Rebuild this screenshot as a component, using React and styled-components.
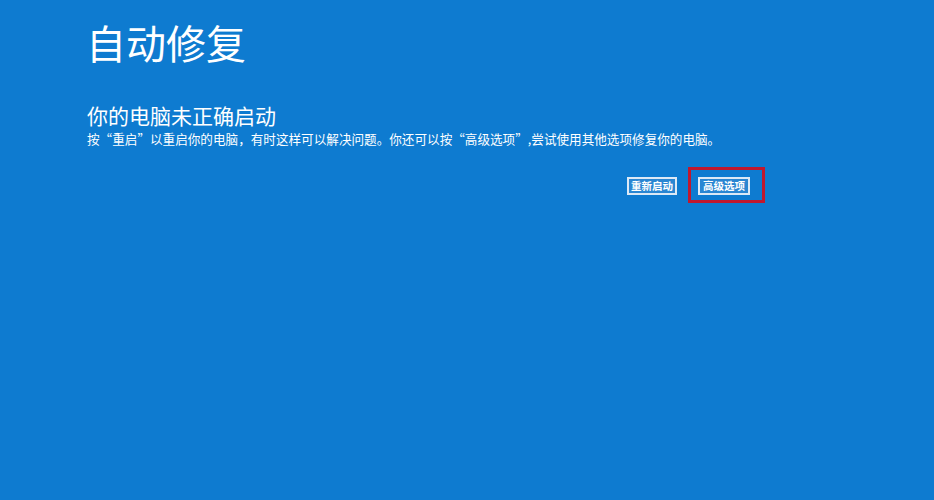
import React from "react";
import styled, { createGlobalStyle } from "styled-components";

const Global = createGlobalStyle`
  html, body { margin: 0; padding: 0; background: #0e7bd0; }
  body { width: 934px; height: 500px; overflow: hidden; }
  #root { width: 934px; height: 500px; }
`;

const Screen = styled.div`
  width: 934px;
  height: 500px;
  box-sizing: border-box;
  background: #0e7bd0;
  padding: 17px 0 0 86px;
  color: #ffffff;
  font-family: "Noto Sans CJK SC", "Noto Sans", sans-serif;
`;

const Column = styled.div`
  width: 679px;
  display: flex;
  flex-direction: column;
`;

const Title = styled.h1`
  margin: 0;
  font-size: 40px;
  line-height: 50px;
  font-weight: 400;
`;

const Subtitle = styled.h2`
  margin: 35px 0 0 1px;
  font-size: 21px;
  line-height: 26px;
  font-weight: 400;
`;

const Body = styled.p`
  margin: 2px 0 0 1px;
  font-size: 12.6px;
  line-height: 18px;
  font-weight: 400;
  white-space: nowrap;
`;

const ButtonRow = styled.div`
  margin-top: 19px;
  display: flex;
  justify-content: flex-end;
  align-items: flex-start;
  gap: 11px;
`;

const Button = styled.button`
  margin-top: ${(p) => p.$offset || 0}px;
  height: 18px;
  width: ${(p) => p.$w}px;
  box-sizing: border-box;
  padding: 0;
  border: 2px solid #dce9f6;
  background: #2a86d2;
  color: #ffffff;
  font-family: "Noto Sans CJK SC", sans-serif;
  font-size: 10.5px;
  font-weight: 700;
  line-height: 14px;
  cursor: pointer;
`;

const Highlight = styled.div`
  border: 3px solid #c0172e;
  padding: 7px 12px 5px 7px;
  display: flex;
`;

export default function App() {
  return (
    <>
      <Global />
      <Screen>
        <Column>
          <Title>自动修复</Title>
          <Subtitle>你的电脑未正确启动</Subtitle>
          <Body>
            按“重启”以重启你的电脑，有时这样可以解决问题。你还可以按“高级选项”,尝试使用其他选项修复你的电脑。
          </Body>
          <ButtonRow>
            <Button $w={50} $offset={10}>重新启动</Button>
            <Highlight>
              <Button $w={52}>高级选项</Button>
            </Highlight>
          </ButtonRow>
        </Column>
      </Screen>
    </>
  );
}
